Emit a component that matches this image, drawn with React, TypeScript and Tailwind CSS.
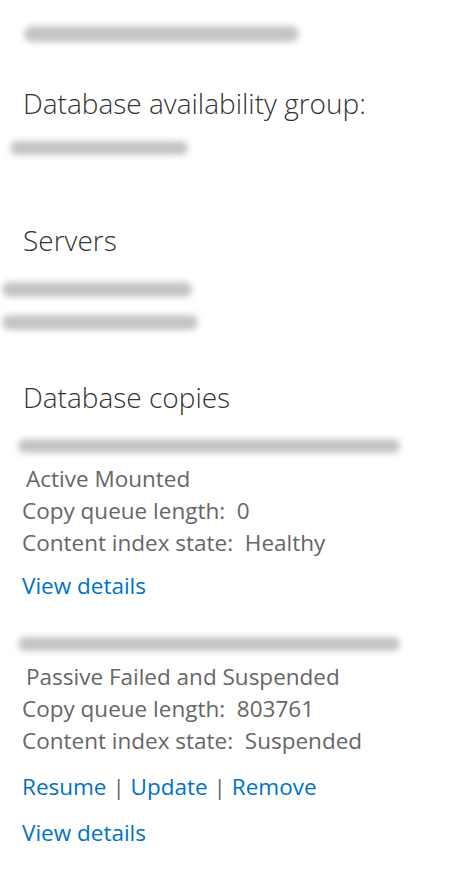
import React from 'react';

// redacted value, shown as a smudge like in the screenshot
function Smudge({ className }: { className: string }) {
  return <div className={`rounded-full bg-[#c4c4c4] blur-[3px] ${className}`} />;
}

function Heading({ children }: { children: React.ReactNode }) {
  return <h2 className="pl-[23px] text-[28px] font-light leading-[36px] text-[#333333]">{children}</h2>;
}

function Copy({
  status,
  queue,
  index,
  actions,
}: {
  status: string;
  queue: string;
  index: string;
  actions?: boolean;
}) {
  return (
    <div className="flex flex-col">
      <Smudge className="ml-[18px] h-[14px] w-[382px]" />
      <div className="mt-[10px] pl-[22px] text-[22.5px] leading-[32px] text-[#666666]">
        <p className="pl-[4px]">{status}</p>
        <p>Copy queue length:&nbsp; {queue}</p>
        <p>Content index state:&nbsp; {index}</p>
      </div>
      {actions && (
        <div className="mt-[14px] pl-[22px] text-[22.5px] leading-[32px] text-[#0072c6]">
          <a>Resume</a> <span className="text-[#666666]">|</span> <a>Update</a>{' '}
          <span className="text-[#666666]">|</span> <a>Remove</a>
        </div>
      )}
      <a className={`${actions ? 'mt-[14px]' : 'mt-[11px]'} pl-[22px] text-[22.5px] leading-[32px] text-[#0072c6]`}>
        View details
      </a>
    </div>
  );
}

export default function App() {
  return (
    <div className="min-h-screen w-[476px] bg-white pt-[26px] font-['Open_Sans',sans-serif]">
      <Smudge className="ml-[24px] h-[16px] w-[275px]" />

      <div className="mt-[43px]">
        <Heading>Database availability group:</Heading>
      </div>
      <Smudge className="ml-[10px] mt-[20px] h-[14px] w-[178px]" />

      <div className="mt-[67px]">
        <Heading>Servers</Heading>
      </div>
      <div className="mt-[24px] flex flex-col gap-[18px]">
        <Smudge className="ml-[2px] h-[15px] w-[190px]" />
        <Smudge className="ml-[2px] h-[15px] w-[196px]" />
      </div>

      <div className="mt-[49px]">
        <Heading>Database copies</Heading>
      </div>
      <div className="mt-[24px] flex flex-col gap-[35px]">
        <Copy status="Active Mounted" queue="0" index="Healthy" />
        <Copy status="Passive Failed and Suspended" queue="803761" index="Suspended" actions />
      </div>
    </div>
  );
}
